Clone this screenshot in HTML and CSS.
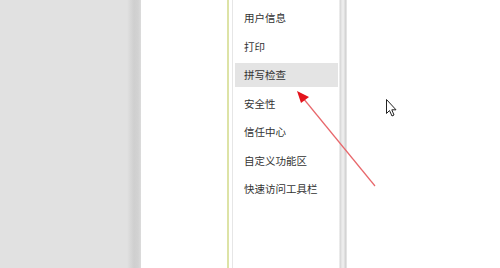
FILE: index.html
```html
<!DOCTYPE html>
<html lang="zh-CN">
<head>
<meta charset="utf-8">
<link rel="stylesheet" href="styles.css">
</head>
<body>
<div class="screen">
  <div class="side"></div>
  <div class="gap"></div>
  <div class="menu">
    <ul class="list">
      <li class="item">用户信息</li>
      <li class="item">打印</li>
      <li class="item active">拼写检查</li>
      <li class="item">安全性</li>
      <li class="item">信任中心</li>
      <li class="item">自定义功能区</li>
      <li class="item">快速访问工具栏</li>
    </ul>
  </div>
  <div class="edge"></div>
  <div class="rest"></div>
  <svg class="overlay" width="500" height="268" viewBox="0 0 500 268">
    <line x1="375" y1="186" x2="303" y2="98" stroke="#e8676b" stroke-width="1.2"/>
    <polygon points="297,91 309,97 301,103" fill="#e3141c"/>
    <path d="M386.5 99.5 L386.5 113.5 L389.5 110.5 L392 116 L394 115 L391.8 109.8 L396 109.8 Z" fill="#fff" stroke="#222" stroke-width="1" stroke-linejoin="miter"/>
  </svg>
</div>
</body>
</html>
```

FILE: styles.css
```css
html, body {
  margin: 0;
  padding: 0;
  background: #fff;
}
.screen {
  position: relative;
  width: 500px;
  height: 268px;
  display: flex;
  overflow: hidden;
  font-family: "Noto Sans CJK SC", "Microsoft YaHei", sans-serif;
}
.side {
  width: 141px;
  flex: none;
  background: linear-gradient(to right, #e1e1e1 0, #e1e1e1 127px, #d9d9d9 130px, #cfcfcf 134px, #d2d2d2 138px, #dcdcdc 141px);
}
.gap {
  width: 86px;
  flex: none;
  background: #fff;
}
.menu {
  width: 109px;
  flex: none;
  border-left: 2px solid #dde3a6;
  display: flex;
}
.list {
  list-style: none;
  margin: 0 0 0 3px;
  padding: 6px 0 0 2px;
  border-left: 1px solid #e6e6e6;
  flex: 1;
  display: flex;
  flex-direction: column;
  gap: 4.5px;
}
.item {
  height: 24px;
  line-height: 24px;
  padding-left: 9px;
  font-size: 10.5px;
  color: #333;
  white-space: nowrap;
}
.item.active {
  background: #e4e4e4;
}
.edge {
  width: 9px;
  flex: none;
  background: linear-gradient(to right, #fff 0, #fff 1px, #d6d6d6 2px, #dedede 3px, #ececec 4px, #ececec 6px, #d4d4d4 7px, #d4d4d4 8px, #f2f2f2 9px);
}
.rest {
  flex: 1;
  background: #fff;
}
.overlay {
  position: absolute;
  left: 0;
  top: 0;
  pointer-events: none;
}
```
